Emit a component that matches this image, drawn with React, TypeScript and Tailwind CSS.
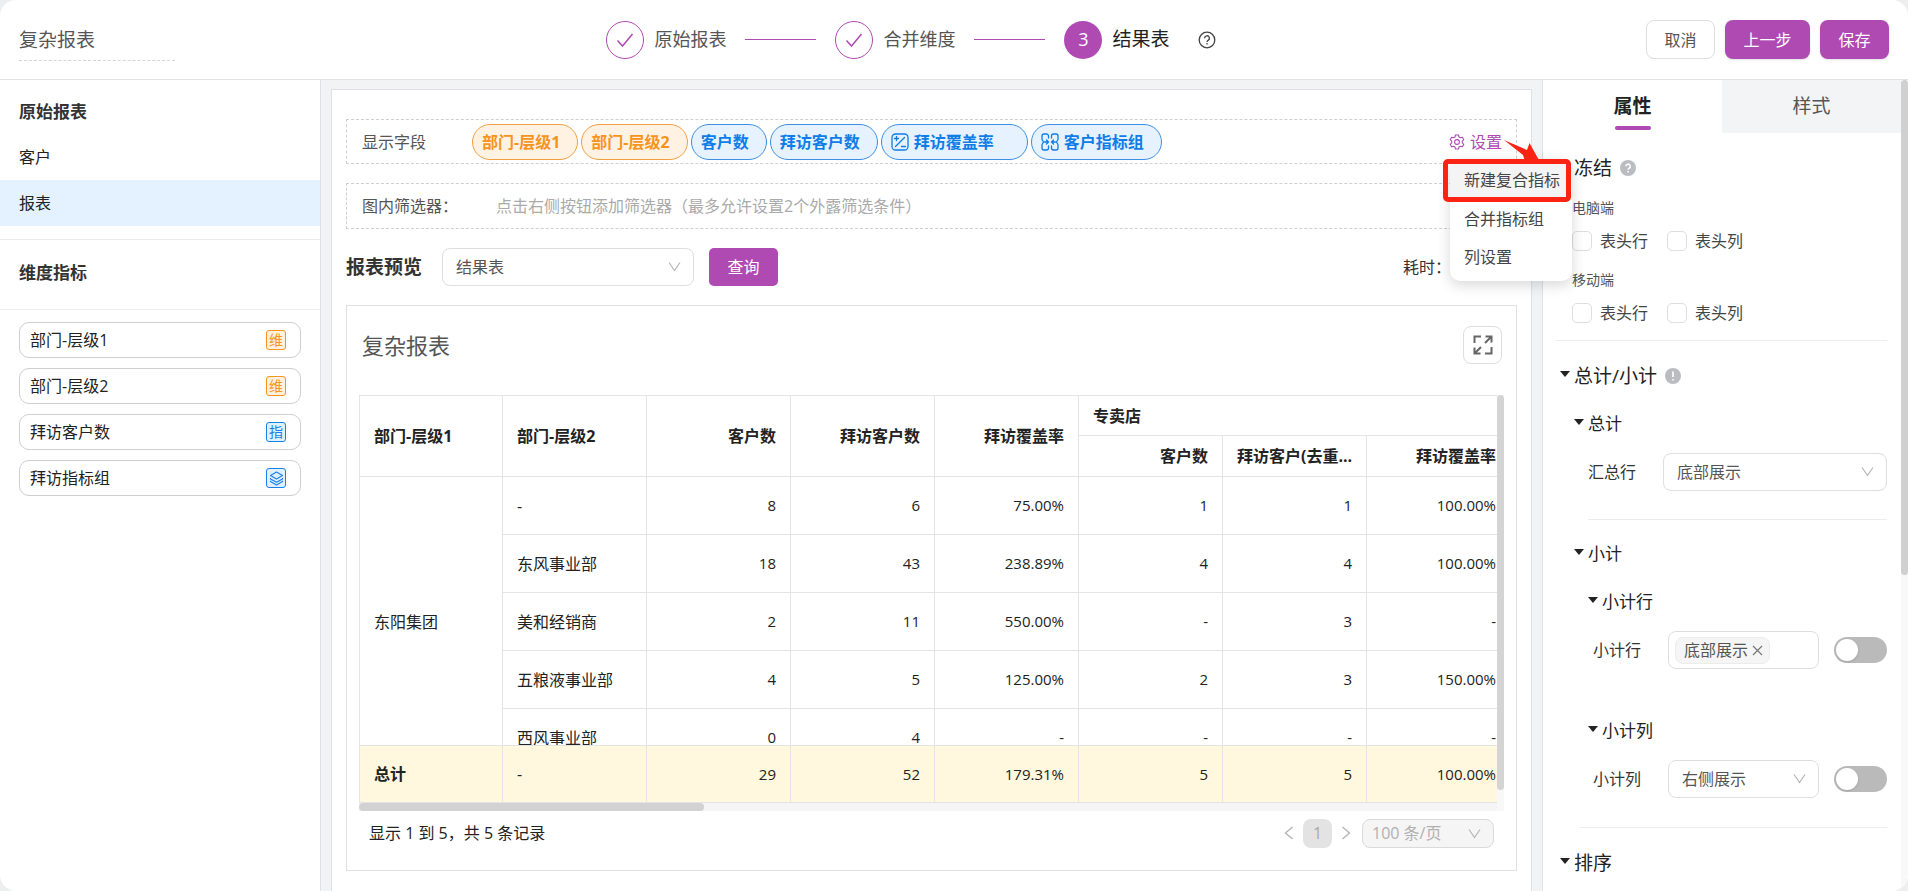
import React, { useState } from 'react';
import { clsx } from 'clsx';

type TagKind = 'dimension' | 'measure';

interface FieldTag {
  label: string;
  kind: TagKind;
  icon?: 'formula' | 'merge';
}

const fieldTags: FieldTag[] = [
  { label: '部门-层级1', kind: 'dimension' },
  { label: '部门-层级2', kind: 'dimension' },
  { label: '客户数', kind: 'measure' },
  { label: '拜访客户数', kind: 'measure' },
  { label: '拜访覆盖率', kind: 'measure', icon: 'formula' },
  { label: '客户指标组', kind: 'measure', icon: 'merge' },
];

const sourceFields = [
  { label: '部门-层级1', badge: '维' },
  { label: '部门-层级2', badge: '维' },
  { label: '拜访客户数', badge: '指' },
  { label: '拜访指标组', badge: 'group' },
];

const rows = [
  ['-', '8', '6', '75.00%', '1', '1', '100.00%'],
  ['东风事业部', '18', '43', '238.89%', '4', '4', '100.00%'],
  ['美和经销商', '2', '11', '550.00%', '-', '3', '-'],
  ['五粮液事业部', '4', '5', '125.00%', '2', '3', '150.00%'],
  ['西风事业部', '0', '4', '-', '-', '-', '-'],
];

const totals = ['29', '52', '179.31%', '5', '5', '100.00%'];

const CheckIcon = () => (
  <svg width="18" height="18" viewBox="0 0 18 18" fill="none" stroke="currentColor" strokeWidth="1.5">
    <path d="M1.5 9.5 6.5 15 16.5 3" />
  </svg>
);

const ChevronIcon = ({ className }: { className?: string }) => (
  <svg className={className} width="13" height="13" viewBox="0 0 13 13" fill="none" stroke="currentColor" strokeWidth="1.2">
    <path d="M1 2.5 6.5 10.5 12 2.5" />
  </svg>
);

const ArrowIcon = ({ flip }: { flip?: boolean }) => (
  <svg className={clsx(flip && 'rotate-180')} width="10" height="14" viewBox="0 0 10 14" fill="none" stroke="currentColor" strokeWidth="1.4">
    <path d="M8.5 1 1.5 7l7 6" />
  </svg>
);

const CaretIcon = () => (
  <svg className="shrink-0 -mt-1" width="10" height="6" viewBox="0 0 10 6" fill="#222">
    <path d="M0 0h10L5 6z" />
  </svg>
);

const GearIcon = () => (
  <svg width="16" height="16" viewBox="0 0 16 16" fill="none" stroke="currentColor" strokeWidth="1.1" strokeLinejoin="round">
    <path d="M6.5 1h3l.5 2 1.4.8 2-.6 1.4 2.5-1.5 1.500v1.600l1.500 1.500-1.400 2.500-2-.6-1.400.8-.5 2h-3l-.5-2-1.400-.8-2 .6-1.400-2.500 1.500-1.500V7.200L1.200 5.700 2.600 3.200l2 .6L6 3z" />
    <circle cx="8" cy="8" r="2.400" />
  </svg>
);

const FormulaIcon = () => (
  <svg width="18" height="18" viewBox="0 0 18 18" fill="none" stroke="currentColor" strokeWidth="1.3" strokeLinecap="round">
    <rect x="1" y="1" width="16" height="16" rx="3.500" />
    <path d="M4.500 13.500 13.500 4.500M3.500 5.500h4M5.500 3.500v4M10.500 13.500h4" />
  </svg>
);

const MergeIcon = () => (
  <svg width="18" height="18" viewBox="0 0 18 18" fill="none" stroke="currentColor" strokeWidth="1.3" strokeLinecap="round" strokeLinejoin="round">
    <path d="M7.500 5V3a2 2 0 0 0-2-2H3a2 2 0 0 0-2 2v3.500l1.500 2.500L1 11.500V15a2 2 0 0 0 2 2h2.500a2 2 0 0 0 2-2v-2" />
    <path d="M10.500 5V3a2 2 0 0 1 2-2H15a2 2 0 0 1 2 2v3.500L15.500 9l1.500 2.500V15a2 2 0 0 1-2 2h-2.500a2 2 0 0 1-2-2v-2" />
    <path d="M3.500 9h4M5.500 7l2 2-2 2M14.500 9h-4M12.500 7l-2 2 2 2" />
  </svg>
);

const GroupIcon = () => (
  <svg width="15" height="15" viewBox="0 0 15 15" fill="none" stroke="currentColor" strokeWidth="1.1" strokeLinejoin="round">
    <path d="M7.500 1 13.500 4.500 7.500 8 1.500 4.500z" />
    <path d="M1.500 7v1l6 3.300L13.500 8V7M1.500 9.800v.8l6 3.400 6-3.400v-.8" />
  </svg>
);

const ExpandIcon = () => (
  <svg width="20" height="20" viewBox="0 0 20 20" fill="none" stroke="#666" strokeWidth="2">
    <path d="M1.500 8V1.500H8M12 18.500h6.500V12" />
    <path d="M12.500 1.500h6v6M18.500 1.500 12 8M1.500 12.500v6h6M1.500 18.500 8 12" />
  </svg>
);

const Select = ({ id, label, value, className }: { id: string; label: string; value: string; className?: string }) => (
  <div className={clsx('relative', className)}>
    <select
      id={id}
      aria-label={label}
      className="w-full h-[38px] appearance-none rounded-lg border border-[#dcdee2] bg-white pl-[13px] pr-9 text-[16px] text-[#555] outline-none"
    >
      <option>{value}</option>
    </select>
    <ChevronIcon className="pointer-events-none absolute right-[13px] top-[12px] text-[#b5b5b5]" />
  </div>
);

const Switch = ({ label }: { label: string }) => (
  <input
    type="checkbox"
    role="switch"
    aria-label={label}
    className="ml-auto h-[26px] w-[53px] shrink-0 appearance-none rounded-full bg-[#bababa] before:m-0.5 before:block before:h-[22px] before:w-[22px] before:rounded-full before:bg-white before:shadow checked:bg-[#b04ab3]"
  />
);

const Check = ({ label }: { label: string }) => (
  <label className="flex w-[95px] items-center gap-2 text-[16px] text-[#444]">
    <input type="checkbox" className="h-5 w-5 appearance-none rounded-[5px] border border-[#dcdee2] bg-white checked:bg-[#b04ab3]" />
    {label}
  </label>
);

const TopBar = () => (
  <header className="grid h-20 shrink-0 grid-cols-[1fr_auto_1fr] items-center border-b border-[#dfe1e4] bg-white px-[19px]">
    <input
      aria-label="报表名称"
      defaultValue="复杂报表"
      className="h-[42px] w-[156px] border-b border-dashed border-[#d5d5d5] text-[19px] text-[#555] outline-none"
    />
    <ol className="flex items-center pr-[86px] text-[18px] text-[#555]">
      {['原始报表', '合并维度'].map((step) => (
        <li key={step} className="flex items-center">
          <span className="flex h-[38px] w-[38px] items-center justify-center rounded-full border border-[#b04ab3] text-[#b04ab3]">
            <CheckIcon />
          </span>
          <span className="ml-2.5">{step}</span>
          <span className="mx-[19px] h-px w-[71px] bg-[#b04ab3]" />
        </li>
      ))}
      <li className="flex items-center">
        <span className="flex h-[38px] w-[38px] items-center justify-center rounded-full bg-[#b04ab3] text-white">3</span>
        <span className="ml-2.5 text-[19px] text-[#222]">结果表</span>
        <svg className="ml-7" width="18" height="18" viewBox="0 0 18 18" fill="none" stroke="#444" strokeWidth="1.3">
          <circle cx="9" cy="9" r="7.800" />
          <path d="M6.600 7.200a2.400 2.400 0 1 1 3.500 2.100c-.8.400-1.100.8-1.100 1.600M9 12v1.500" />
        </svg>
      </li>
    </ol>
    <div className="flex justify-end gap-2.5 text-[16px]">
      <button className="h-[39px] w-[69px] rounded-lg border border-[#dcdee2] bg-white text-[#555]">取消</button>
      <button className="h-[39px] w-[85px] rounded-lg bg-[#b04ab3] text-white shadow-sm">上一步</button>
      <button className="h-[39px] w-[69px] rounded-lg bg-[#b04ab3] text-white shadow-sm">保存</button>
    </div>
  </header>
);

const SourcePanel = () => {
  const [active, setActive] = useState('报表');

  return (
    <aside className="w-[321px] shrink-0 border-r border-[#dfe1e4] bg-white">
      <h2 className="flex h-[54px] items-center pl-[19px] pt-2.5 text-[17px] font-bold text-[#333]">原始报表</h2>
      {['客户', '报表'].map((item) => (
        <button
          key={item}
          onClick={() => setActive(item)}
          className={clsx('block h-[46px] w-full pl-[19px] text-left text-[16px] text-[#222]', active === item && 'bg-[#e4f1fe]')}
        >
          {item}
        </button>
      ))}
      <h2 className="mt-[13px] flex h-[71px] items-center border-y border-[#ececee] pl-[19px] pb-1 text-[17px] font-bold text-[#333]">维度指标</h2>
      <ul className="space-y-2.5 px-[19px] py-3">
        {sourceFields.map((field) => (
          <li key={field.label} className="flex h-9 items-center justify-between rounded-[10px] border border-[#cdcfd2] pl-2.5 pr-[14px] text-[16px] text-[#222]">
            {field.label}
            <span
              className={clsx(
                'flex h-5 w-5 items-center justify-center rounded-[3px] border text-[14px] leading-none',
                field.badge === '维'
                  ? 'border-[#f7941e] bg-[#fff1dc] text-[#f7941e]'
                  : 'border-[#1a7fe8] bg-[#dff1ff] text-[#1a7fe8]'
              )}
            >
              {field.badge === 'group' ? <GroupIcon /> : field.badge}
            </span>
          </li>
        ))}
      </ul>
    </aside>
  );
};

const SettingsMenu = () => (
  <div className="absolute right-[-56px] top-[39px] z-20 w-[122px] rounded-[10px] bg-white pb-[5px] text-[16px] text-[#444] shadow-[0_4px_14px_rgba(0,0,0,0.16)]">
    <div className="absolute -left-[7px] top-0 h-[43px] w-[128px] rounded-[5px] border-[5px] border-[#fb2414]" />
    <svg className="absolute -top-[19px] left-[54px]" width="36" height="24" viewBox="0 0 36 24" fill="#fb2414">
      <path d="M0 0 23 10 25.500 3 36 22 21 21 19 15z" />
    </svg>
    <button className="block h-[41px] w-full rounded-t-[10px] bg-[#f4f4f4] pl-[14px] text-left">新建复合指标</button>
    <button className="block h-[38px] w-full pl-[14px] text-left">合并指标组</button>
    <button className="block h-[38px] w-full pl-[14px] text-left">列设置</button>
  </div>
);

const FieldBar = () => (
  <div className="relative flex h-[45px] items-center border border-dashed border-[#cfcfcf] pl-[15px] pr-[14px] text-[16px] text-[#555]">
    <span className="w-[110px] shrink-0">显示字段</span>
    <div className="flex gap-[3px]">
      {fieldTags.map((tag) => (
        <span
          key={tag.label}
          className={clsx(
            'flex h-9 items-center gap-[5px] rounded-full border pl-[9px] font-bold',
            tag.icon === 'formula' ? 'pr-[33px]' : 'pr-[17px]',
            tag.kind === 'dimension'
              ? 'border-[#f0a040] bg-[#fff2e2] text-[#f7941e]'
              : 'border-[#3d8fe0] bg-[#e6f2ff] text-[#0f7de8]'
          )}
        >
          {tag.icon === 'formula' && <FormulaIcon />}
          {tag.icon === 'merge' && <MergeIcon />}
          {tag.label}
        </span>
      ))}
    </div>
    <button className="ml-auto flex items-center gap-[5px] text-[#b04ab3]">
      <GearIcon />
      设置
    </button>
    <SettingsMenu />
  </div>
);

const headCell = 'border-r border-b border-[#e2e4e7] bg-white px-[14px] font-bold';
const bodyCell = 'border-r border-b border-[#e2e4e7] px-[14px]';
const totalCell = 'sticky bottom-0 h-[58px] border-y border-r border-[#e2e4e7] bg-[#fff8de] px-[14px]';

const ResultTable = () => (
  <div className="flex">
    <div className="min-w-0 flex-1">
      <div className="h-[408px] overflow-hidden border-l border-[#e2e4e7]">
        <table className="w-[1151px] table-fixed border-separate border-spacing-0 text-[16px] text-[#222]">
          <colgroup>
            <col className="w-[143px]" />
            {rows[0].map((_, i) => (
              <col key={i} className="w-[144px]" />
            ))}
          </colgroup>
          <thead>
            <tr className="h-[41px]">
              <th rowSpan={2} className={clsx(headCell, 'border-t text-left')}>部门-层级1</th>
              <th rowSpan={2} className={clsx(headCell, 'border-t text-left')}>部门-层级2</th>
              <th rowSpan={2} className={clsx(headCell, 'border-t text-right')}>客户数</th>
              <th rowSpan={2} className={clsx(headCell, 'border-t text-right')}>拜访客户数</th>
              <th rowSpan={2} className={clsx(headCell, 'border-t text-right')}>拜访覆盖率</th>
              <th colSpan={3} className={clsx(headCell, 'border-t text-left')}>专卖店</th>
            </tr>
            <tr className="h-[41px]">
              <th className={clsx(headCell, 'text-right')}>客户数</th>
              <th className={clsx(headCell, 'whitespace-nowrap text-left')}>拜访客户(去重...</th>
              <th className={clsx(headCell, 'text-right')}>拜访覆盖率</th>
            </tr>
          </thead>
          <tbody>
            {rows.map((row, i) => (
              <tr key={i} className="h-[58px]">
                {i === 0 && <td rowSpan={rows.length} className={bodyCell}>东阳集团</td>}
                {row.map((cell, j) => (
                  <td key={j} className={clsx(bodyCell, j > 0 && 'text-right text-[15px]')}>{cell}</td>
                ))}
              </tr>
            ))}
          </tbody>
          <tfoot>
            <tr>
              <th scope="row" className={clsx(totalCell, 'text-left font-bold')}>总计</th>
              <td className={totalCell}>-</td>
              {totals.map((cell, i) => (
                <td key={i} className={clsx(totalCell, 'text-right text-[15px]')}>{cell}</td>
              ))}
            </tr>
          </tfoot>
        </table>
      </div>
      <div className="h-2 bg-[#f5f5f5]">
        <div className="h-full w-[345px] rounded bg-[#d2d2d2]" />
      </div>
    </div>
    <div className="w-[7px] shrink-0 bg-[#f8f8f8]">
      <div className="h-[95%] rounded bg-[#d4d4d4]" />
    </div>
  </div>
);

const Preview = () => (
  <section className="mt-[19px] h-[566px] border border-[#dfe1e4] px-3">
    <div className="flex h-[89px] items-center justify-between pb-3 pl-[3px] pr-0.5">
      <h3 className="text-[22px] leading-7 text-[#555]">复杂报表</h3>
      <button aria-label="全屏" className="flex h-[38px] w-[39px] items-center justify-center rounded-lg border border-[#dcdee2]">
        <ExpandIcon />
      </button>
    </div>
    <ResultTable />
    <footer className="mt-[7px] flex h-[30px] items-center justify-between pl-2.5 pr-2.5 text-[16px] text-[#222]">
      <span>显示 1 到 5，共 5 条记录</span>
      <div className="flex items-center gap-[9px] text-[#b5b5b5]">
        <button aria-label="上一页"><ArrowIcon /></button>
        <button className="h-[29px] w-[29px] rounded-lg bg-[#e3e3e3] text-[#aaa]">1</button>
        <button aria-label="下一页"><ArrowIcon flip /></button>
        <div className="relative ml-0.5">
          <select aria-label="每页条数" className="h-[29px] w-[132px] appearance-none rounded-lg border border-[#dadada] bg-[#f5f5f5] pl-[9px] text-[16px] text-[#b0b0b0] outline-none">
            <option>100 条/页</option>
          </select>
          <ChevronIcon className="pointer-events-none absolute right-[13px] top-2" />
        </div>
      </div>
    </footer>
  </section>
);

const Workspace = () => (
  <main className="min-w-0 flex-1 px-2.5 pt-[9px]">
    <div className="h-full border-x border-t border-[#dfe1e4] bg-white px-[14px] pt-[29px]">
      <FieldBar />
      <div className="mt-[19px] flex h-[46px] items-center border border-dashed border-[#cfcfcf] px-[15px] text-[16px] text-[#555]">
        <span className="w-[134px] shrink-0">图内筛选器：</span>
        <span className="text-[#aaa]">点击右侧按钮添加筛选器（最多允许设置2个外露筛选条件）</span>
      </div>
      <div className="mt-[19px] flex items-center">
        <h2 className="text-[19px] font-bold text-[#333]">报表预览</h2>
        <Select id="result" label="报表" value="结果表" className="ml-5 w-[252px]" />
        <button className="ml-[15px] h-[38px] w-[69px] rounded-[5px] bg-[#b04ab3] text-[16px] text-white">查询</button>
        <span className="ml-auto w-[114px] text-[16px] text-[#333]">耗时：</span>
      </div>
      <Preview />
    </div>
  </main>
);

const Divider = ({ className }: { className?: string }) => <hr className={clsx('border-t border-[#ececee]', className)} />;

const PropertyPanel = () => (
  <aside className="flex w-[366px] shrink-0 border-l border-[#dfe1e4] bg-white">
    <div className="min-w-0 flex-1">
      <div className="grid h-[53px] grid-cols-2 text-[19px]" role="tablist">
        <button role="tab" aria-selected="true" className="relative font-bold text-[#222]">
          属性
          <span className="absolute bottom-[3px] left-1/2 h-1 w-9 -translate-x-1/2 rounded-full bg-[#b04ab3]" />
        </button>
        <button role="tab" aria-selected="false" className="bg-[#f2f4f6] text-[#555]">样式</button>
      </div>

      <div className="pl-[13px] pr-[14px] pt-[11px]">
        <section className="pl-4">
          <h3 className="flex h-12 items-center gap-2 pl-0.5 text-[19px] text-[#222]">
            冻结
            <svg width="16" height="16" viewBox="0 0 16 16">
              <circle cx="8" cy="8" r="8" fill="#b9bdc2" />
              <path d="M5.800 6.300a2.200 2.200 0 1 1 3.200 2c-.7.400-1 .7-1 1.400M8 11v1.600" fill="none" stroke="#fff" strokeWidth="1.500" />
            </svg>
          </h3>
          <p className="h-8 text-[14px] leading-8 text-[#555]">电脑端</p>
          <div className="flex h-[34px] items-center">
            <Check label="表头行" />
            <Check label="表头列" />
          </div>
          <p className="mt-1.5 h-8 text-[14px] leading-8 text-[#555]">移动端</p>
          <div className="flex h-[34px] items-center">
            <Check label="表头行" />
            <Check label="表头列" />
          </div>
        </section>
        <Divider className="mb-[11px] mt-2.5" />

        <h3 className="flex h-12 items-center gap-1 pl-1 text-[19px] text-[#222]">
          <CaretIcon />
          总计/小计
          <svg className="ml-1" width="16" height="16" viewBox="0 0 16 16">
            <circle cx="8" cy="8" r="8" fill="#b9bdc2" />
            <path d="M8 3.500v5.500M8 11v1.600" stroke="#fff" strokeWidth="1.600" />
          </svg>
        </h3>

        <section className="pl-8">
          <h4 className="-ml-[14px] flex h-12 items-center gap-1 text-[17px] text-[#222]">
            <CaretIcon />
            总计
          </h4>
          <div className="flex h-12 items-center">
            <label htmlFor="total-row" className="w-[75px] shrink-0 text-[16px] text-[#333]">汇总行</label>
            <Select id="total-row" label="汇总行" value="底部展示" className="flex-1" />
          </div>
          <Divider className="mb-2.5 mt-[23px]" />

          <h4 className="-ml-[14px] flex h-12 items-center gap-1 text-[17px] text-[#222]">
            <CaretIcon />
            小计
          </h4>
          <h5 className="flex h-12 items-center gap-1 text-[17px] text-[#222]">
            <CaretIcon />
            小计行
          </h5>
          <div className="flex h-12 items-center pl-[5px]">
            <span className="w-[75px] shrink-0 text-[16px] text-[#333]">小计行</span>
            <div className="flex h-[38px] w-[151px] items-center rounded-lg border border-[#dcdee2] pl-1.5">
              <span className="flex h-[27px] items-center gap-1 rounded-lg border border-[#ececec] bg-[#f5f5f5] pl-2 pr-1.5 text-[16px] text-[#555]">
                底部展示
                <button aria-label="移除">
                  <svg width="11" height="11" viewBox="0 0 11 11" stroke="#777" strokeWidth="1.200">
                    <path d="M1 1l9 9M10 1 1 10" />
                  </svg>
                </button>
              </span>
            </div>
            <Switch label="小计行" />
          </div>

          <h5 className="mt-[33px] flex h-12 items-center gap-1 text-[17px] text-[#222]">
            <CaretIcon />
            小计列
          </h5>
          <div className="flex h-12 items-center pl-[5px]">
            <label htmlFor="sub-col" className="w-[75px] shrink-0 text-[16px] text-[#333]">小计列</label>
            <Select id="sub-col" label="小计列" value="右侧展示" className="w-[151px]" />
            <Switch label="小计列" />
          </div>
        </section>
        <Divider className="mb-[11px] ml-6 mt-6" />

        <h3 className="flex h-12 items-center gap-1 pl-1 text-[19px] text-[#222]">
          <CaretIcon />
          排序
        </h3>
      </div>
    </div>
    <div className="w-[7px] shrink-0 bg-[#f8f8f8]">
      <div className="h-[61%] rounded bg-[#d0d0d0]" />
    </div>
  </aside>
);

export default function App() {
  return (
    <div className="h-screen bg-[#eceef0] font-['Open_Sans','Noto_Sans_CJK_SC',sans-serif]" lang="zh-CN">
      <div className="flex h-full flex-col overflow-hidden rounded-2xl bg-[#f2f3f5]">
        <TopBar />
        <div className="flex min-h-0 flex-1">
          <SourcePanel />
          <Workspace />
          <PropertyPanel />
        </div>
      </div>
    </div>
  );
}
